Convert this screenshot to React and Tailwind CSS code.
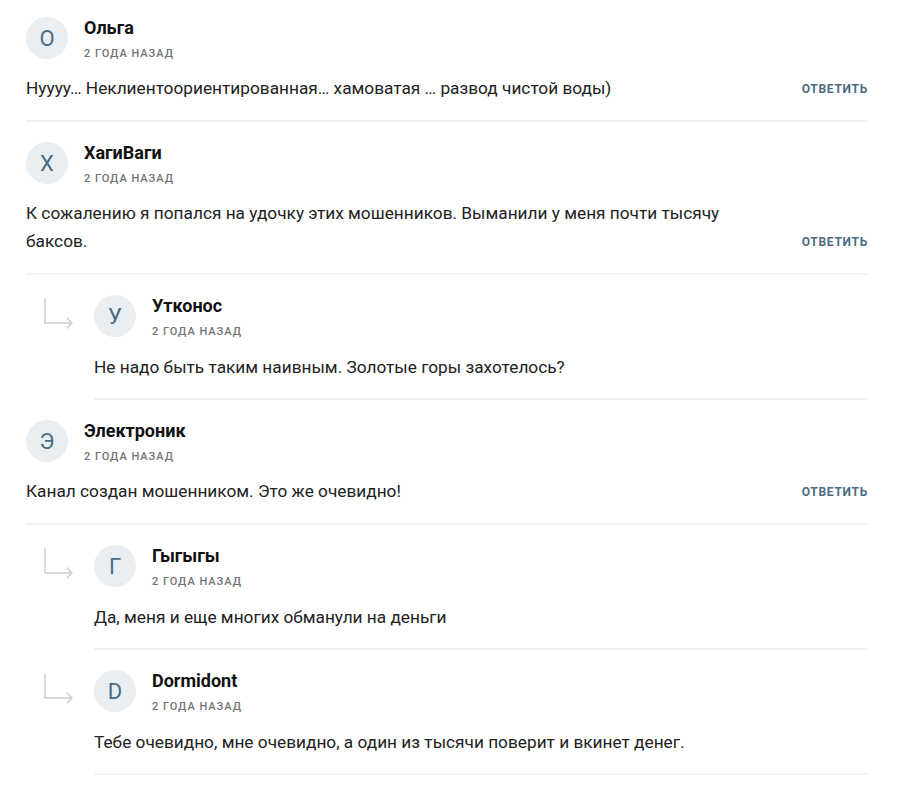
const comments = [
  {
    letter: 'О',
    name: 'Ольга',
    text: 'Нуууу… Неклиентоориентированная… хамоватая … развод чистой воды)',
    replies: [],
  },
  {
    letter: 'Х',
    name: 'ХагиВаги',
    text: 'К сожалению я попался на удочку этих мошенников. Выманили у меня почти тысячу баксов.',
    replies: [
      { letter: 'У', name: 'Утконос', text: 'Не надо быть таким наивным. Золотые горы захотелось?' },
    ],
  },
  {
    letter: 'Э',
    name: 'Электроник',
    text: 'Канал создан мошенником. Это же очевидно!',
    replies: [
      { letter: 'Г', name: 'Гыгыгы', text: 'Да, меня и еще многих обманули на деньги' },
      { letter: 'D', name: 'Dormidont', text: 'Тебе очевидно, мне очевидно, а один из тысячи поверит и вкинет денег.' },
    ],
  },
];

function ReplyArrow() {
  return (
    <svg width="32" height="32" viewBox="0 0 32 32" fill="none" className="shrink-0">
      <path
        d="M1 2v24h27M23 21l5 5-5 5"
        stroke="#c9cdd0"
        strokeWidth="1.5"
        strokeLinecap="round"
        strokeLinejoin="round"
      />
    </svg>
  );
}

function Header({ letter, name }) {
  return (
    <div className="flex items-start gap-4">
      <div className="flex h-[42px] w-[42px] shrink-0 items-center justify-center rounded-full bg-[#e9eef2] text-[22px] text-[#4b6b80]">
        {letter}
      </div>
      <div className="flex flex-col pt-px">
        <span className="text-[18px] font-bold leading-[20px] text-[#111]">{name}</span>
        <span className="mt-[11px] text-[11px] font-medium uppercase leading-[10px] tracking-[0.09em] text-[#737373]">
          2 года назад
        </span>
      </div>
    </div>
  );
}

function Comment({ c }) {
  return (
    <div className="border-b-2 border-[#f2f3f5] pt-5 pb-[18px]">
      <Header letter={c.letter} name={c.name} />
      <div className="mt-[15px] flex items-end justify-between gap-6">
        <p className="max-w-[720px] text-[17.25px] leading-[28px] text-[#222]">{c.text}</p>
        <button className="shrink-0 pb-[5px] text-xs font-bold uppercase leading-[16px] tracking-[0.06em] text-[#4b6b80]">
          Ответить
        </button>
      </div>
    </div>
  );
}

function Reply({ r }) {
  return (
    <div className="flex">
      <div className="w-[68px] shrink-0 pt-[22px] pl-[18px]">
        <ReplyArrow />
      </div>
      <div className="flex-1 border-b-2 border-[#f2f3f5] pt-5 pb-[17px]">
        <Header letter={r.letter} name={r.name} />
        <p className="mt-4 text-[17.25px] leading-[28px] text-[#222]">{r.text}</p>
      </div>
    </div>
  );
}

export default function App() {
  return (
    <div className="min-h-screen bg-white font-['Roboto',sans-serif]">
      <div className="ml-[26px] w-[842px] -mt-[3px]">
        {comments.map((c, i) => (
          <div key={i}>
            <Comment c={c} />
            {c.replies.map((r, j) => (
              <Reply key={j} r={r} />
            ))}
          </div>
        ))}
      </div>
    </div>
  );
}
